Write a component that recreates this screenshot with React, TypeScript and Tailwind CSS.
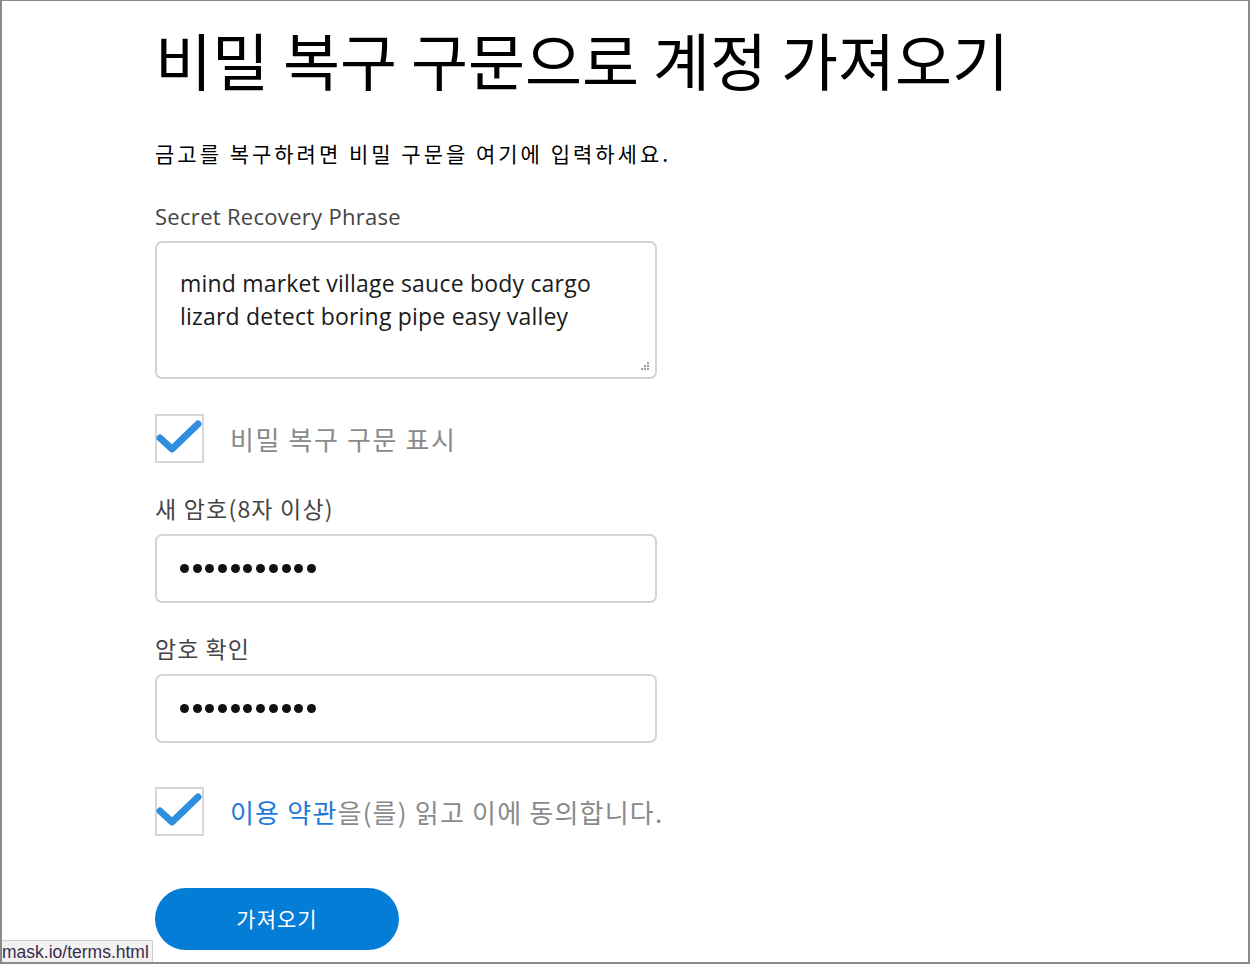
import React from 'react';

const kr = "font-['Noto_Sans_CJK_KR','Noto_Sans',sans-serif]";
const latin = "font-['Open_Sans','Noto_Sans_CJK_KR',sans-serif]";

function Check() {
  return (
    <div className="flex h-[49px] w-[49px] shrink-0 items-center justify-center border-2 border-[#d6d6d6] bg-white">
      <svg width="46" height="34" viewBox="0 0 46 34" className="-mt-[6px] -ml-[1px]">
        <path d="M4 19 L16 30 L42 5" fill="none" stroke="#2f8ede" strokeWidth="7" strokeLinecap="round" strokeLinejoin="round" />
      </svg>
    </div>
  );
}

function Dots() {
  return (
    <div className="flex gap-[3.7px]">
      {Array.from({ length: 11 }).map((_, i) => (
        <span key={i} className="h-[9px] w-[9px] rounded-full bg-[#111]" />
      ))}
    </div>
  );
}

export default function App() {
  return (
    <div className={`relative h-[964px] w-[1250px] overflow-hidden border-x-2 border-t border-b-2 border-[#8a8a8a] bg-white ${kr}`}>
      <div className="flex flex-col pl-[153px] pt-[18px]">
        <h1 className="text-[62px] leading-[80px] font-normal text-black">비밀 복구 구문으로 계정 가져오기</h1>
        <p className="mt-[39px] text-[21px] leading-[30px] font-normal tracking-[3px] text-black">금고를 복구하려면 비밀 구문을 여기에 입력하세요.</p>

        <label className={`mt-[33px] text-[22px] leading-[30px] tracking-[0.3px] text-[#444] ${latin}`}>Secret Recovery Phrase</label>
        <div className="relative mt-[10px] h-[138px] w-[502px] rounded-[7px] border-2 border-[#d4d4d4] px-[23px] pt-[24px]">
          <p className={`text-[23px] leading-[33px] font-medium tracking-[0.2px] text-[#1a1a1a] ${latin}`}>
            mind market village sauce body cargo
            <br />
            lizard detect boring pipe easy valley
          </p>
          <svg className="absolute bottom-[4px] right-[4px]" width="12" height="12" viewBox="0 0 12 12">
            <g fill="#9a9a9a">
              <rect x="8" y="1" width="2" height="2" />
              <rect x="5" y="4" width="2" height="2" />
              <rect x="8" y="4" width="2" height="2" />
              <rect x="2" y="7" width="2" height="2" />
              <rect x="5" y="7" width="2" height="2" />
              <rect x="8" y="7" width="2" height="2" />
            </g>
          </svg>
        </div>

        <div className="mt-[35px] flex items-center gap-[26px]">
          <Check />
          <span className="text-[26px] leading-[34px] tracking-[1.6px] text-[#8a8a8a]">비밀 복구 구문 표시</span>
        </div>

        <label className="mt-[29px] text-[23px] leading-[32px] tracking-[1.2px] text-[#444]">새 암호(8자 이상)</label>
        <div className="mt-[10px] flex h-[69px] w-[502px] items-center rounded-[7px] border-2 border-[#d4d4d4] px-[23px]">
          <Dots />
        </div>

        <label className="mt-[29px] text-[23px] leading-[32px] tracking-[1px] text-[#444]">암호 확인</label>
        <div className="mt-[10px] flex h-[69px] w-[502px] items-center rounded-[7px] border-2 border-[#d4d4d4] px-[23px]">
          <Dots />
        </div>

        <div className="mt-[44px] flex items-center gap-[26px]">
          <Check />
          <span className="text-[26px] leading-[34px] tracking-[1.2px] text-[#8a8a8a]">
            <span className="text-[#1f7ad8]">이용 약관</span>을(를) 읽고 이에 동의합니다.
          </span>
        </div>

        <button className="mt-[52px] flex h-[62px] w-[244px] items-center justify-center rounded-full bg-[#037dd6] text-[21px] tracking-[1px] text-white">
          가져오기
        </button>
      </div>

      <div className="absolute bottom-0 left-0 h-[22px] w-[151px] overflow-hidden border-t border-r border-[#cfcfcf] bg-[#f2f2f2] text-[17.5px] leading-[22px] text-[#3a2b4a] font-['Liberation_Sans',sans-serif]">
        mask.io/terms.html
      </div>
    </div>
  );
}
